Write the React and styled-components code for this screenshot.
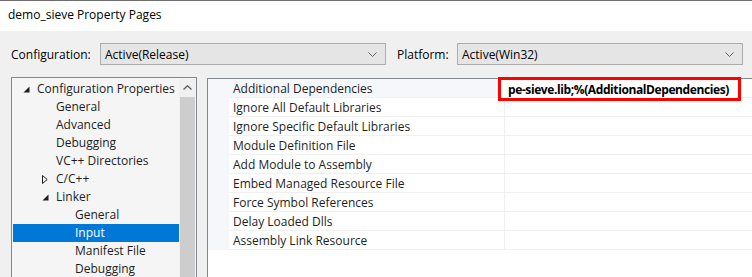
import React from "react";
import styled, { createGlobalStyle } from "styled-components";

const GlobalStyle = createGlobalStyle`
  html, body { margin: 0; padding: 0; background: #f0f0f0; }
  body { font-family: "Open Sans", "Noto Sans", sans-serif; font-size: 12px; color: #000; }
`;

const treeItems = [
  { label: "Configuration Properties", level: 0, toggle: "open" },
  { label: "General", level: 1 },
  { label: "Advanced", level: 1 },
  { label: "Debugging", level: 1 },
  { label: "VC++ Directories", level: 1 },
  { label: "C/C++", level: 1, toggle: "closed" },
  { label: "Linker", level: 1, toggle: "open" },
  { label: "General", level: 2 },
  { label: "Input", level: 2, selected: true },
  { label: "Manifest File", level: 2 },
  { label: "Debugging", level: 2 },
];

const properties = [
  "Additional Dependencies",
  "Ignore All Default Libraries",
  "Ignore Specific Default Libraries",
  "Module Definition File",
  "Add Module to Assembly",
  "Embed Managed Resource File",
  "Force Symbol References",
  "Delay Loaded Dlls",
  "Assembly Link Resource",
];

const Chevron = () => (
  <svg width="9" height="5" viewBox="0 0 9 5">
    <path d="M0.5 0.5 L4.5 4.5 L8.5 0.5" fill="none" stroke="#606060" strokeWidth="1" />
  </svg>
);

const Toggle = ({ kind }) =>
  kind === "open" ? (
    <svg width="7" height="7" viewBox="0 0 7 7">
      <path d="M6.5 0.5 L6.5 6.5 L0.5 6.5 Z" fill="#1e1e1e" />
    </svg>
  ) : (
    <svg width="6" height="9" viewBox="0 0 6 9">
      <path d="M0.5 0.5 L5.2 4.5 L0.5 8.5 Z" fill="none" stroke="#1e1e1e" strokeWidth="1" />
    </svg>
  );

const App = () => {
  return (
    <>
      <GlobalStyle />
      <Window>
        <TitleBar>demo_sieve Property Pages</TitleBar>
        <Body>
          <ConfigRow>
            <FieldLabel $width={89}>Configuration:</FieldLabel>
            <Combo>
              <span>Active(Release)</span>
              <Chevron />
            </Combo>
            <FieldLabel $width={60} $left={11}>Platform:</FieldLabel>
            <Combo>
              <span>Active(Win32)</span>
              <Chevron />
            </Combo>
          </ConfigRow>
          <Main>
            <TreePanel>
              <TreeList>
                {treeItems.map((item, i) => (
                  <TreeRow key={i} $level={item.level} $selected={item.selected}>
                    <ToggleSlot>{item.toggle && <Toggle kind={item.toggle} />}</ToggleSlot>
                    {item.label}
                  </TreeRow>
                ))}
              </TreeList>
              <ScrollBar>
                <ScrollArrow>
                  <svg width="9" height="5" viewBox="0 0 9 5">
                    <path d="M0.5 4.5 L4.5 0.8 L8.5 4.5" fill="none" stroke="#606060" strokeWidth="1.4" />
                  </svg>
                </ScrollArrow>
                <ScrollThumb />
              </ScrollBar>
            </TreePanel>
            <GridPanel>
              {properties.map((name, i) => (
                <GridRow key={name}>
                  <Gutter />
                  <NameCell $active={i === 0}>{name}</NameCell>
                  <ValueCell>
                    {i === 0 && (
                      <Highlight>pe-sieve.lib;%(AdditionalDependencies)</Highlight>
                    )}
                  </ValueCell>
                </GridRow>
              ))}
            </GridPanel>
          </Main>
        </Body>
      </Window>
    </>
  );
};

const Window = styled.div`
  width: 752px;
  height: 277px;
  overflow: hidden;
  display: flex;
  flex-direction: column;
  background: #f0f0f0;
`;

const TitleBar = styled.div`
  height: 31px;
  flex: none;
  box-sizing: border-box;
  border-top: 1px solid #6e6e6e;
  background: #ffffff;
  padding: 6px 0 0 8px;
  font-size: 12px;
  line-height: 16px;
`;

const Body = styled.div`
  flex: 1;
  background: #f0f0f0;
  padding: 12px 0 0 11px;
  min-height: 0;
  display: flex;
  flex-direction: column;
`;

const ConfigRow = styled.div`
  display: flex;
  align-items: center;
  height: 22px;
`;

const FieldLabel = styled.div`
  width: ${(p) => p.$width}px;
  margin-left: ${(p) => p.$left || 0}px;
  flex: none;
`;

const Combo = styled.div`
  width: 286px;
  height: 22px;
  box-sizing: border-box;
  border: 1px solid #adadad;
  background: #e5e5e5;
  display: flex;
  align-items: center;
  justify-content: space-between;
  padding: 0 8px 0 4px;
`;

const Main = styled.div`
  flex: 1;
  display: flex;
  margin-top: 12px;
  min-height: 0;
`;

const TreePanel = styled.div`
  width: 186px;
  flex: none;
  box-sizing: border-box;
  border: 1px solid #828790;
  border-bottom: none;
  background: #f5f5f5;
  display: flex;
  padding: 1px 1px 0 1px;
`;

const TreeList = styled.div`
  flex: 1;
  padding-top: 1px;
`;

const TreeRow = styled.div`
  height: 18px;
  line-height: 18px;
  display: flex;
  align-items: center;
  padding-left: ${(p) => 8 + p.$level * 19}px;
  background: ${(p) => (p.$selected ? "#0078d7" : "transparent")};
  color: ${(p) => (p.$selected ? "#ffffff" : "#1e1e1e")};
  white-space: nowrap;
`;

const ToggleSlot = styled.span`
  width: 16px;
  flex: none;
  display: flex;
  align-items: center;
  justify-content: flex-start;
  padding-left: 2px;
  box-sizing: border-box;
`;

const ScrollBar = styled.div`
  width: 16px;
  flex: none;
  background: #f0f0f0;
  display: flex;
  flex-direction: column;
  align-items: center;
`;

const ScrollArrow = styled.div`
  height: 17px;
  display: flex;
  align-items: center;
  justify-content: center;
`;

const ScrollThumb = styled.div`
  flex: 1;
  width: 15px;
  margin-top: 1px;
  background: #cdcdcd;
`;

const GridPanel = styled.div`
  flex: 1;
  margin: 1px 0 0 10px;
  border-top: 1px solid #828790;
  border-left: 1px solid #828790;
  background: #ffffff;
  width: 560px;
`;

const GridRow = styled.div`
  display: flex;
  height: 19px;
`;

const Gutter = styled.div`
  width: 21px;
  flex: none;
  background: #f5f7fa;
`;

const NameCell = styled.div`
  width: 271px;
  flex: none;
  box-sizing: content-box;
  padding: 2px 0 0 4px;
  line-height: 16px;
  border-bottom: 1px solid #f0f0f0;
  border-right: 1px solid #f0f0f0;
  background: ${(p) => (p.$active ? "#f5f7fb" : "#ffffff")};
  color: #1e1e1e;
  white-space: nowrap;
`;

const ValueCell = styled.div`
  flex: 1;
  position: relative;
  border-bottom: 1px solid #f0f0f0;
`;

const Highlight = styled.div`
  position: absolute;
  left: -7px;
  top: -2px;
  width: 243px;
  height: 24px;
  box-sizing: border-box;
  border: 3px solid #ff0000;
  background: #ffffff;
  font-weight: 700;
  letter-spacing: -0.4px;
  line-height: 19px;
  padding-left: 7px;
  white-space: nowrap;
  z-index: 1;
`;

export default App;
